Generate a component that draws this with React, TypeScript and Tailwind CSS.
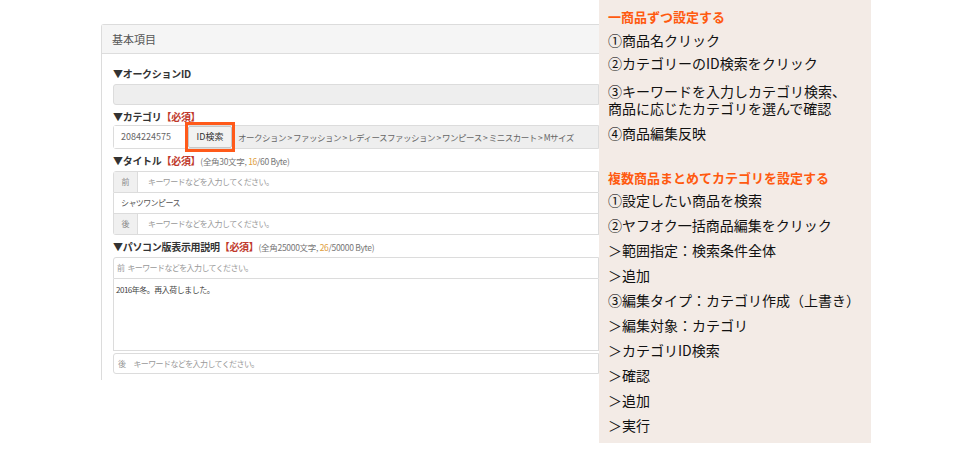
import React from 'react';

const jp = { fontFamily: '"Noto Sans CJK JP", "Noto Sans", sans-serif' };

const Label = ({ children, cls = 'h-[20px]' }: { children: React.ReactNode; cls?: string }) => (
  <div className={`${cls} flex items-center text-[10px] text-[#333] leading-none tracking-[-0.3px] whitespace-nowrap`}>
    {children}
  </div>
);

const Req = () => <span className="text-[#c0392b] font-bold">【必須】</span>;

const AddonRow = ({ addon, text, cls = '' }: { addon?: string; text: string; cls?: string }) => (
  <div className={`flex border border-[#dcdcdc] bg-white ${cls}`}>
    {addon && (
      <div className="w-[24px] flex items-center justify-center bg-[#f0f0f0] border-r border-[#dcdcdc] text-[8px] text-[#888]">
        {addon}
      </div>
    )}
    <div
      className={`flex items-center text-[8px] tracking-[-0.6px] ${
        addon ? 'pl-[10px] text-[#999]' : 'pl-[7px] text-[#555]'
      }`}
    >
      {text}
    </div>
  </div>
);

const steps1 = ['①商品名クリック', '②カテゴリーのID検索をクリック'];
const steps2 = [
  '①設定したい商品を検索',
  '②ヤフオク一括商品編集をクリック',
  '＞範囲指定：検索条件全体',
  '＞追加',
  '③編集タイプ：カテゴリ作成（上書き）',
  '＞編集対象：カテゴリ',
  '＞カテゴリID検索',
  '＞確認',
  '＞追加',
  '＞実行',
];

export default function App() {
  return (
    <div className="w-[953px] h-[458px] bg-white flex" style={jp}>
      <div className="w-[101px]" />
      <div className="w-[498px] pt-[24px]">
        <div className="h-[356px] border-l border-t border-[#dcdcdc] rounded-tl-[3px] bg-white">
          <div className="h-[29px] bg-[#f5f5f5] border-b border-[#dddddd] flex items-center pl-[10px] text-[11px] text-[#555]">
            基本項目
          </div>
          <div className="pl-[11px] pt-[10px]">
            <Label><span className="font-bold">▼オークションID</span></Label>
            <div className="h-[21px] bg-[#eeeeee] border border-[#dcdcdc] rounded-l-[3px]" />
            <div className="h-[4px]" />
            <Label cls="h-[16px]"><span className="font-bold">▼カテゴリ</span><Req /></Label>
            <div className="flex h-[24px] border border-[#dcdcdc] rounded-l-[3px] items-stretch">
              <div className="w-[71px] bg-white flex items-center pl-[7px] text-[9px] text-[#666]">2084224575</div>
              <div className="relative w-[50px] flex items-center justify-center">
                <div className="absolute -top-[4px] -bottom-[4px] left-0 right-0 border-[3px] border-[#ff5a1a]" />
                <div className="h-[22px] w-[44px] bg-[#f2f2f2] border border-[#c8c8c8] rounded-[2px] flex items-center justify-center text-[9px] text-[#333]">
                  ID検索
                </div>
              </div>
              <div className="flex-1 bg-[#eeeeee] flex items-center pl-[3px] text-[8.5px] tracking-[-0.5px] text-[#666] whitespace-nowrap overflow-hidden">
                オークション &gt; ファッション &gt; レディースファッション &gt; ワンピース &gt; ミニスカート &gt; Mサイズ
              </div>
            </div>
            <div className="h-[2px]" />
            <Label>
              <span className="font-bold">▼タイトル</span><Req />
              <span className="text-[8.5px] text-[#777]">(全角30文字, <span className="text-[#e0a040]">16</span>/60 Byte)</span>
            </Label>
            <AddonRow addon="前" text="キーワードなどを入力してください。" cls="h-[22px] rounded-tl-[3px]" />
            <AddonRow text="シャツワンピース" cls="h-[21px] border-t-0" />
            <AddonRow addon="後" text="キーワードなどを入力してください。" cls="h-[21px] border-t-0 rounded-bl-[3px]" />
            <div className="h-[2px]" />
            <Label>
              <span className="font-bold">▼パソコン版表示用説明</span><Req />
              <span className="text-[8.5px] text-[#777]">(全角25000文字, <span className="text-[#e0a040]">26</span>/50000 Byte)</span>
            </Label>
            <div className="h-[22px] border border-[#dcdcdc] rounded-tl-[3px] flex items-center pl-[3px] text-[8px] tracking-[-0.6px] text-[#999]">
              <span className="mr-[3px]">前</span>キーワードなどを入力してください。
            </div>
            <div className="h-[72px] border border-t-0 border-[#dcdcdc] pl-[2px] pt-[5px] text-[8px] tracking-[-0.5px] text-[#444]">
              2016年冬。再入荷しました。
            </div>
            <div className="h-[2px]" />
            <div className="h-[21px] border border-[#dcdcdc] rounded-l-[3px] flex items-center pl-[4px] text-[8px] tracking-[-0.6px] text-[#999]">
              <span className="mr-[8px]">後</span>キーワードなどを入力してください。
            </div>
          </div>
        </div>
      </div>
      <div className="w-[272px] h-[443px] bg-[#f3ebe6] pl-[9px] pt-[7px] text-[14px] text-[#111] leading-none">
        <div className="h-[18px] flex items-center text-[13px] font-bold text-[#ff5a10]">一商品ずつ設定する</div>
        <div className="h-[3.5px]" />
        {steps1.map((s) => (
          <div key={s} className="h-[23px] flex items-center">{s}</div>
        ))}
        <div className="h-[8px]" />
        <div className="h-[17px] flex items-center">③キーワードを入力しカテゴリ検索、</div>
        <div className="h-[17px] flex items-center">商品に応じたカテゴリを選んで確認</div>
        <div className="h-[33px] flex items-center">④商品編集反映</div>
        <div className="h-[18.5px]" />
        <div className="h-[18px] flex items-center text-[13px] font-bold text-[#ff5a10]">複数商品まとめてカテゴリを設定する</div>
        <div className="h-[1.5px]" />
        {steps2.map((s, i) => (
          <div key={i} className="h-[25px] flex items-center">{s}</div>
        ))}
      </div>
    </div>
  );
}
